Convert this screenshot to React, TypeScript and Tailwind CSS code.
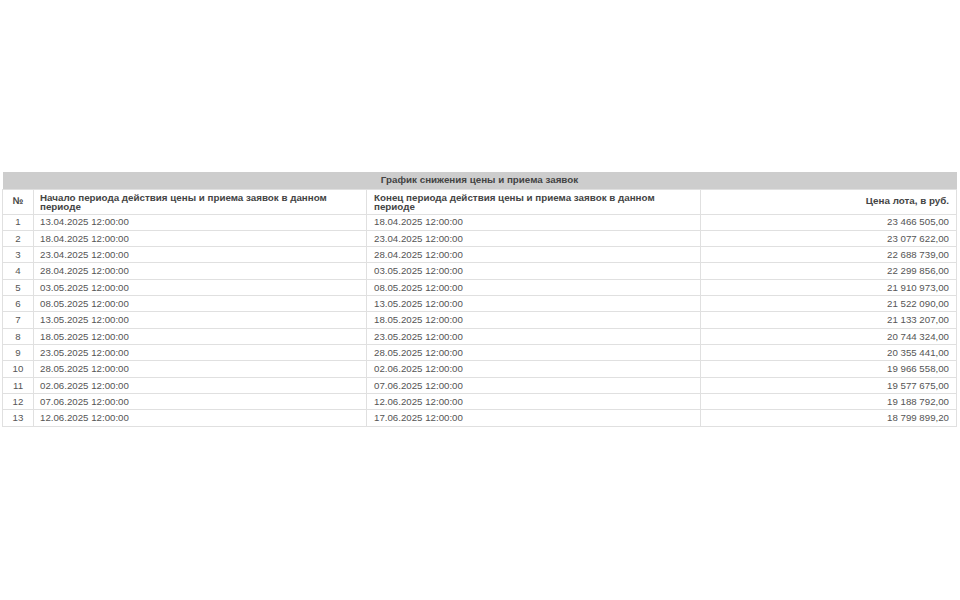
const rows = [
  ["13.04.2025 12:00:00", "18.04.2025 12:00:00", "23 466 505,00"],
  ["18.04.2025 12:00:00", "23.04.2025 12:00:00", "23 077 622,00"],
  ["23.04.2025 12:00:00", "28.04.2025 12:00:00", "22 688 739,00"],
  ["28.04.2025 12:00:00", "03.05.2025 12:00:00", "22 299 856,00"],
  ["03.05.2025 12:00:00", "08.05.2025 12:00:00", "21 910 973,00"],
  ["08.05.2025 12:00:00", "13.05.2025 12:00:00", "21 522 090,00"],
  ["13.05.2025 12:00:00", "18.05.2025 12:00:00", "21 133 207,00"],
  ["18.05.2025 12:00:00", "23.05.2025 12:00:00", "20 744 324,00"],
  ["23.05.2025 12:00:00", "28.05.2025 12:00:00", "20 355 441,00"],
  ["28.05.2025 12:00:00", "02.06.2025 12:00:00", "19 966 558,00"],
  ["02.06.2025 12:00:00", "07.06.2025 12:00:00", "19 577 675,00"],
  ["07.06.2025 12:00:00", "12.06.2025 12:00:00", "19 188 792,00"],
  ["12.06.2025 12:00:00", "17.06.2025 12:00:00", "18 799 899,20"],
];

export default function App() {
  return (
    <div className="h-[600px] w-[960px] bg-white pl-[2px] pt-[172px] font-['Liberation_Sans',Arial,sans-serif] text-[9.7px] text-[#555]">
      <table className="w-[955px] table-fixed border-collapse">
        <colgroup>
          <col className="w-[31px]" />
          <col className="w-[333px]" />
          <col className="w-[334px]" />
          <col />
        </colgroup>
        <thead>
          <tr className="h-[17px] bg-[#cdcdcd]">
            <th colSpan={4} className="p-0 text-center text-[9.8px] font-bold leading-none text-[#444]">
              График снижения цены и приема заявок
            </th>
          </tr>
          <tr className="h-[25px] text-[9.8px] font-bold text-[#444]">
            <th className="border border-[#e0e0e0] p-0 text-center">№</th>
            <th className="border border-[#e0e0e0] py-0 pl-[6px] pr-[30px] text-left font-bold leading-[9px]">
              Начало периода действия цены и приема заявок в данном периоде
            </th>
            <th className="border border-[#e0e0e0] py-0 pl-[7px] pr-[30px] text-left font-bold leading-[9px]">
              Конец периода действия цены и приема заявок в данном периоде
            </th>
            <th className="border border-[#e0e0e0] py-0 pr-[7px] text-right font-bold">Цена лота, в руб.</th>
          </tr>
        </thead>
        <tbody>
          {rows.map((row, i) => (
            <tr key={row[0]} className="h-[16.33px]">
              <td className="border border-[#e0e0e0] p-0 text-center leading-none">{i + 1}</td>
              <td className="border border-[#e0e0e0] py-0 pl-[6px] leading-none">{row[0]}</td>
              <td className="border border-[#e0e0e0] py-0 pl-[7px] leading-none">{row[1]}</td>
              <td className="border border-[#e0e0e0] py-0 pr-[7px] text-right leading-none">{row[2]}</td>
            </tr>
          ))}
        </tbody>
      </table>
    </div>
  );
}
